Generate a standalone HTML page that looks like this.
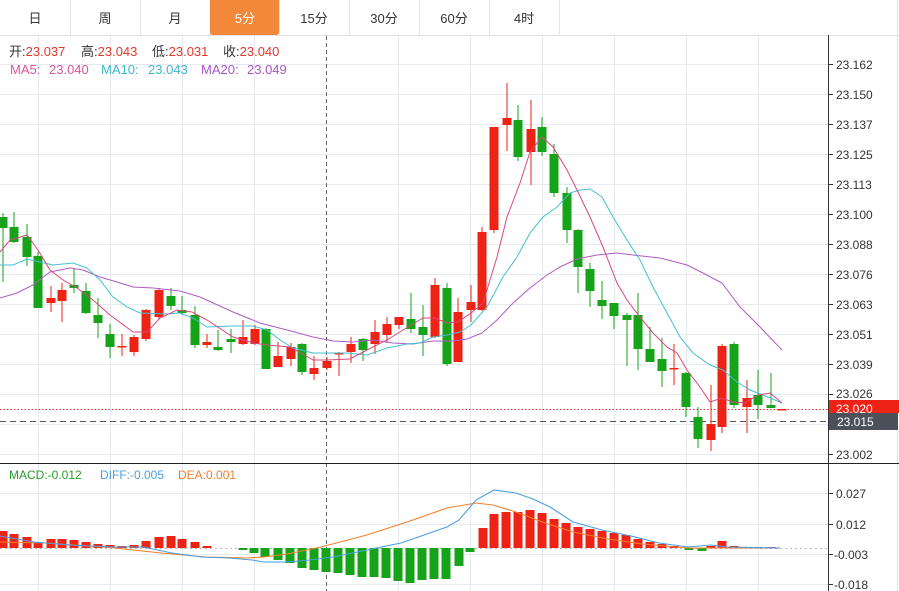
<!DOCTYPE html>
<html><head><meta charset="utf-8">
<style>
html,body{margin:0;padding:0;background:#fff;}
body{width:899px;height:591px;overflow:hidden;font-family:"Liberation Sans","Noto Sans CJK SC",sans-serif;}
svg{display:block}
.r{fill:#ee2316;stroke:#ee2316}
.g{fill:#16a31a;stroke:#16a31a}
line.r,line.g{stroke-width:1}
rect.r,rect.g{stroke-width:0}
.t{font-size:12px;fill:#333}
.tab{font-size:13px;fill:#333;text-anchor:middle;font-family:"Liberation Sans","Noto Sans CJK SC",sans-serif}
</style></head><body>
<svg width="899" height="591" viewBox="0 0 899 591" xmlns="http://www.w3.org/2000/svg">
<rect width="899" height="591" fill="#fff"/>
<rect x="0" y="0" width="899" height="35" fill="#fff"/>
<line x1="0" y1="35.5" x2="899" y2="35.5" stroke="#e3e3e3"/>
<g stroke="#e3e3e3">
<line x1="70.5" y1="0" x2="70.5" y2="35"/><line x1="140.5" y1="0" x2="140.5" y2="35"/><line x1="210.5" y1="0" x2="210.5" y2="35"/><line x1="279.5" y1="0" x2="279.5" y2="35"/><line x1="349.5" y1="0" x2="349.5" y2="35"/><line x1="419.5" y1="0" x2="419.5" y2="35"/><line x1="489.5" y1="0" x2="489.5" y2="35"/><line x1="559.5" y1="0" x2="559.5" y2="35"/>
</g>
<path d="M210 0H279V32Q279 35 276 35H213Q210 35 210 32Z" fill="#f2883a"/>
<text class="tab" x="35" y="23">日</text>
<text class="tab" x="105" y="23">周</text>
<text class="tab" x="175" y="23">月</text>
<text class="tab" x="245" y="23" style="fill:#fff">5分</text>
<text class="tab" x="314" y="23">15分</text>
<text class="tab" x="384" y="23">30分</text>
<text class="tab" x="454" y="23">60分</text>
<text class="tab" x="524" y="23">4时</text>
<line x1="897.5" y1="0" x2="897.5" y2="591" stroke="#e3e3e3"/>
<g stroke="#e6e9ee" stroke-width="1">
<line x1="0" y1="64.5" x2="829" y2="64.5"/><line x1="0" y1="94.5" x2="829" y2="94.5"/><line x1="0" y1="124.5" x2="829" y2="124.5"/><line x1="0" y1="154.5" x2="829" y2="154.5"/><line x1="0" y1="184.5" x2="829" y2="184.5"/><line x1="0" y1="214.5" x2="829" y2="214.5"/><line x1="0" y1="244.5" x2="829" y2="244.5"/><line x1="0" y1="274.5" x2="829" y2="274.5"/><line x1="0" y1="304.5" x2="829" y2="304.5"/><line x1="0" y1="334.5" x2="829" y2="334.5"/><line x1="0" y1="364.5" x2="829" y2="364.5"/><line x1="0" y1="394.5" x2="829" y2="394.5"/><line x1="0" y1="424.5" x2="829" y2="424.5"/><line x1="0" y1="454.5" x2="829" y2="454.5"/>
<line x1="0" y1="493.5" x2="829" y2="493.5"/><line x1="0" y1="524.5" x2="829" y2="524.5"/><line x1="0" y1="554.5" x2="829" y2="554.5"/><line x1="0" y1="584.5" x2="829" y2="584.5"/>
<line x1="38.5" y1="36" x2="38.5" y2="591"/><line x1="110.5" y1="36" x2="110.5" y2="591"/><line x1="182.5" y1="36" x2="182.5" y2="591"/><line x1="254.5" y1="36" x2="254.5" y2="591"/><line x1="398.5" y1="36" x2="398.5" y2="591"/><line x1="470.5" y1="36" x2="470.5" y2="591"/><line x1="542.5" y1="36" x2="542.5" y2="591"/><line x1="614.5" y1="36" x2="614.5" y2="591"/><line x1="686.5" y1="36" x2="686.5" y2="591"/><line x1="758.5" y1="36" x2="758.5" y2="591"/>
</g>
<line x1="326.5" y1="36" x2="326.5" y2="591" stroke="#666" stroke-dasharray="4,3"/>
<line x1="828.5" y1="35" x2="828.5" y2="591" stroke="#333"/>
<line x1="0" y1="463.5" x2="899" y2="463.5" stroke="#222"/>
<g stroke="#333">
<line x1="829" y1="64.5" x2="833" y2="64.5"/><line x1="829" y1="94.5" x2="833" y2="94.5"/><line x1="829" y1="124.5" x2="833" y2="124.5"/><line x1="829" y1="154.5" x2="833" y2="154.5"/><line x1="829" y1="184.5" x2="833" y2="184.5"/><line x1="829" y1="214.5" x2="833" y2="214.5"/><line x1="829" y1="244.5" x2="833" y2="244.5"/><line x1="829" y1="274.5" x2="833" y2="274.5"/><line x1="829" y1="304.5" x2="833" y2="304.5"/><line x1="829" y1="334.5" x2="833" y2="334.5"/><line x1="829" y1="364.5" x2="833" y2="364.5"/><line x1="829" y1="394.5" x2="833" y2="394.5"/><line x1="829" y1="454.5" x2="833" y2="454.5"/>
<line x1="829" y1="493.5" x2="833" y2="493.5"/><line x1="829" y1="524.5" x2="833" y2="524.5"/><line x1="829" y1="554.5" x2="833" y2="554.5"/><line x1="829" y1="584.5" x2="833" y2="584.5"/>
</g>
<g class="t">
<text x="836" y="69">23.162</text><text x="836" y="99">23.150</text><text x="836" y="129">23.137</text><text x="836" y="159">23.125</text><text x="836" y="189">23.113</text><text x="836" y="219">23.100</text><text x="836" y="249">23.088</text><text x="836" y="279">23.076</text><text x="836" y="309">23.063</text><text x="836" y="339">23.051</text><text x="836" y="369">23.039</text><text x="836" y="398">23.026</text><text x="836" y="459">23.002</text>
<text x="836" y="498">0.027</text><text x="836" y="529">0.012</text><text x="834" y="559">-0.003</text><text x="834" y="589">-0.018</text>
</g>
<line x1="0" y1="409.5" x2="829" y2="409.5" stroke="#e03030" stroke-dasharray="1.5,2"/>
<line x1="0" y1="421.5" x2="829" y2="421.5" stroke="#555" stroke-dasharray="6,4"/>
<line x1="0" y1="548.5" x2="829" y2="548.5" stroke="#bbb" stroke-dasharray="2,3"/>
<rect x="829" y="400" width="70" height="13" fill="#ee2316"/>
<text x="836" y="413" style="font-size:12px;fill:#fff">23.020</text>
<rect x="829" y="413" width="69" height="17" fill="#4b505b"/>
<text x="837" y="426" style="font-size:12px;fill:#fff">23.015</text>
<g>
<line class="g" x1="3" y1="213" x2="3" y2="282"/><rect class="g" x="-1.5" y="217" width="9" height="11"/>
<line class="g" x1="14" y1="212" x2="14" y2="243"/><rect class="g" x="9.5" y="227" width="9" height="15"/>
<line class="g" x1="27" y1="224" x2="27" y2="266"/><rect class="g" x="22.5" y="237" width="9" height="20"/>
<line class="g" x1="38" y1="252" x2="38" y2="308"/><rect class="g" x="33.5" y="256" width="9" height="52"/>
<line class="r" x1="51" y1="286" x2="51" y2="312"/><rect class="r" x="46.5" y="298" width="9" height="5"/>
<line class="r" x1="62" y1="283" x2="62" y2="322"/><rect class="r" x="57.5" y="290" width="9" height="11"/>
<line class="g" x1="74" y1="268" x2="74" y2="293"/><rect class="g" x="69.5" y="285" width="9" height="3"/>
<line class="g" x1="86" y1="283" x2="86" y2="314"/><rect class="g" x="81.5" y="291" width="9" height="22"/>
<line class="g" x1="98" y1="298" x2="98" y2="338"/><rect class="g" x="93.5" y="315" width="9" height="8"/>
<line class="g" x1="110" y1="324" x2="110" y2="358"/><rect class="g" x="105.5" y="334" width="9" height="13"/>
<line class="r" x1="122" y1="334" x2="122" y2="356"/><rect class="r" x="117.5" y="346" width="9" height="1.5"/>
<line class="r" x1="134" y1="335" x2="134" y2="356"/><rect class="r" x="129.5" y="337" width="9" height="15"/>
<line class="r" x1="146" y1="309" x2="146" y2="341"/><rect class="r" x="141.5" y="310" width="9" height="29"/>
<line class="r" x1="159" y1="288" x2="159" y2="319"/><rect class="r" x="154.5" y="290" width="9" height="27"/>
<line class="g" x1="171" y1="288" x2="171" y2="310"/><rect class="g" x="166.5" y="296" width="9" height="10"/>
<line class="g" x1="182" y1="296" x2="182" y2="315"/><rect class="g" x="177.5" y="310" width="9" height="3"/>
<line class="g" x1="195" y1="306" x2="195" y2="348"/><rect class="g" x="190.5" y="315" width="9" height="30"/>
<line class="r" x1="207" y1="334" x2="207" y2="348"/><rect class="r" x="202.5" y="342" width="9" height="3"/>
<line class="g" x1="218" y1="330" x2="218" y2="351"/><rect class="g" x="213.5" y="347" width="9" height="3"/>
<line class="g" x1="231" y1="329" x2="231" y2="353"/><rect class="g" x="226.5" y="339" width="9" height="3"/>
<line class="r" x1="243" y1="320" x2="243" y2="345"/><rect class="r" x="238.5" y="337" width="9" height="7"/>
<line class="r" x1="255" y1="325" x2="255" y2="345"/><rect class="r" x="250.5" y="329" width="9" height="15"/>
<line class="g" x1="266" y1="328" x2="266" y2="369"/><rect class="g" x="261.5" y="329" width="9" height="40"/>
<line class="r" x1="278" y1="342" x2="278" y2="367"/><rect class="r" x="273.5" y="356" width="9" height="11"/>
<line class="r" x1="291" y1="343" x2="291" y2="366"/><rect class="r" x="286.5" y="347" width="9" height="12"/>
<line class="g" x1="302" y1="343" x2="302" y2="375"/><rect class="g" x="297.5" y="344" width="9" height="28"/>
<line class="r" x1="314" y1="356" x2="314" y2="380"/><rect class="r" x="309.5" y="368" width="9" height="6"/>
<line class="r" x1="327" y1="357" x2="327" y2="370"/><rect class="r" x="322.5" y="361" width="9" height="7"/>
<line class="r" x1="339" y1="352" x2="339" y2="376"/><rect class="r" x="334.5" y="353" width="9" height="1.5"/>
<line class="r" x1="351" y1="337" x2="351" y2="363"/><rect class="r" x="346.5" y="344" width="9" height="8"/>
<line class="g" x1="363" y1="338" x2="363" y2="361"/><rect class="g" x="358.5" y="339" width="9" height="11"/>
<line class="r" x1="375" y1="320" x2="375" y2="354"/><rect class="r" x="370.5" y="332" width="9" height="12"/>
<line class="r" x1="387" y1="317" x2="387" y2="343"/><rect class="r" x="382.5" y="324" width="9" height="11"/>
<line class="r" x1="399" y1="317" x2="399" y2="329"/><rect class="r" x="394.5" y="317" width="9" height="8"/>
<line class="g" x1="411" y1="293" x2="411" y2="333"/><rect class="g" x="406.5" y="319" width="9" height="10"/>
<line class="g" x1="423" y1="305" x2="423" y2="356"/><rect class="g" x="418.5" y="327" width="9" height="8"/>
<line class="r" x1="435" y1="278" x2="435" y2="338"/><rect class="r" x="430.5" y="285" width="9" height="52"/>
<line class="g" x1="447" y1="283" x2="447" y2="366"/><rect class="g" x="442.5" y="288" width="9" height="76"/>
<line class="r" x1="458" y1="298" x2="458" y2="362"/><rect class="r" x="453.5" y="312" width="9" height="50"/>
<line class="r" x1="471" y1="285" x2="471" y2="322"/><rect class="r" x="466.5" y="302" width="9" height="8"/>
<line class="r" x1="482" y1="227" x2="482" y2="311"/><rect class="r" x="477.5" y="232" width="9" height="78"/>
<line class="r" x1="494" y1="127" x2="494" y2="233"/><rect class="r" x="489.5" y="127" width="9" height="103"/>
<line class="r" x1="507" y1="83" x2="507" y2="151"/><rect class="r" x="502.5" y="118" width="9" height="7"/>
<line class="g" x1="518" y1="105" x2="518" y2="161"/><rect class="g" x="513.5" y="120" width="9" height="37"/>
<line class="r" x1="531" y1="100" x2="531" y2="185"/><rect class="r" x="526.5" y="129" width="9" height="23"/>
<line class="g" x1="542" y1="117" x2="542" y2="156"/><rect class="g" x="537.5" y="127" width="9" height="25"/>
<line class="g" x1="554" y1="144" x2="554" y2="197"/><rect class="g" x="549.5" y="154" width="9" height="39"/>
<line class="g" x1="567" y1="187" x2="567" y2="243"/><rect class="g" x="562.5" y="193" width="9" height="37"/>
<line class="g" x1="578" y1="229" x2="578" y2="293"/><rect class="g" x="573.5" y="230" width="9" height="37"/>
<line class="g" x1="590" y1="263" x2="590" y2="307"/><rect class="g" x="585.5" y="269" width="9" height="22"/>
<line class="g" x1="602" y1="281" x2="602" y2="319"/><rect class="g" x="597.5" y="300" width="9" height="6"/>
<line class="g" x1="614" y1="303" x2="614" y2="329"/><rect class="g" x="609.5" y="303" width="9" height="13"/>
<line class="g" x1="627" y1="313" x2="627" y2="366"/><rect class="g" x="622.5" y="315" width="9" height="5"/>
<line class="g" x1="638" y1="293" x2="638" y2="370"/><rect class="g" x="633.5" y="315" width="9" height="34"/>
<line class="g" x1="650" y1="327" x2="650" y2="362"/><rect class="g" x="645.5" y="349" width="9" height="13"/>
<line class="g" x1="662" y1="338" x2="662" y2="387"/><rect class="g" x="657.5" y="359" width="9" height="12"/>
<line class="r" x1="674" y1="344" x2="674" y2="385"/><rect class="r" x="669.5" y="368" width="9" height="1.5"/>
<line class="g" x1="686" y1="372" x2="686" y2="417"/><rect class="g" x="681.5" y="373" width="9" height="34"/>
<line class="g" x1="698" y1="407" x2="698" y2="448"/><rect class="g" x="693.5" y="417" width="9" height="22"/>
<line class="r" x1="711" y1="385" x2="711" y2="451"/><rect class="r" x="706.5" y="424" width="9" height="16"/>
<line class="r" x1="722" y1="344" x2="722" y2="433"/><rect class="r" x="717.5" y="346" width="9" height="81"/>
<line class="g" x1="734" y1="342" x2="734" y2="408"/><rect class="g" x="729.5" y="344" width="9" height="61"/>
<line class="r" x1="747" y1="380" x2="747" y2="433"/><rect class="r" x="742.5" y="398" width="9" height="9"/>
<line class="g" x1="758" y1="370" x2="758" y2="419"/><rect class="g" x="753.5" y="395" width="9" height="10"/>
<line class="g" x1="771" y1="373" x2="771" y2="407"/><rect class="g" x="766.5" y="405" width="9" height="3"/>
<rect class="r" x="777.5" y="409" width="9" height="1.5"/>
</g>
<polyline fill="none" stroke="#b05cc4" stroke-width="1" points="0,298 17,293 33,285 50,272 70,268 83,270 100,277 117,282 133,287 153,288 180,291 200,297 233,312 260,323 287,330 313,337 333,341 353,342 373,340 393,343 413,344 433,341 453,341 467,339 482,333 497,320 513,303 530,288 547,275 560,267 577,259 597,255 617,253 633,255 660,258 687,265 703,273 722,283 740,307 760,327 782,350"/>
<polyline fill="none" stroke="#45bfd3" stroke-width="1" points="0,265 13,265 27,259 40,262 53,265 73,263 87,268 100,280 113,297 127,307 140,313 167,314 180,313 193,318 207,327 233,326 253,326 267,330 280,340 293,348 313,353 327,353 347,353 367,355 387,348 407,344 420,343 433,337 447,335 460,332 471,325 487,307 503,277 517,257 530,233 543,217 557,207 570,193 580,190 590,189 602,197 613,217 627,240 640,260 653,287 667,313 680,337 693,353 710,365 723,370 737,382 750,390 763,395 782,403"/>
<polyline fill="none" stroke="#d8487e" stroke-width="1" points="0,252 10,240 27,235 38,250 50,270 63,280 77,288 93,300 110,315 133,332 147,332 160,318 177,310 192,312 207,320 233,337 253,343 267,345 290,347 313,360 327,360 350,359 367,350 387,340 403,330 423,318 435,318 447,323 458,322 471,313 483,303 497,257 507,217 520,183 530,152 542,137 553,147 567,170 577,190 590,217 603,247 617,283 627,300 640,317 653,333 667,347 677,353 687,370 700,387 710,402 722,398 733,402 745,403 758,395 770,393 782,403"/>
<g>
<rect class="r" x="-1.5" y="531" width="9" height="17"/><rect class="r" x="9.5" y="534" width="9" height="14"/><rect class="r" x="22.5" y="537" width="9" height="11"/><rect class="r" x="33.5" y="542" width="9" height="6"/><rect class="r" x="46.5" y="539" width="9" height="9"/><rect class="r" x="57.5" y="539" width="9" height="9"/><rect class="r" x="69.5" y="540" width="9" height="8"/><rect class="r" x="81.5" y="542" width="9" height="6"/><rect class="r" x="93.5" y="544" width="9" height="4"/><rect class="r" x="105.5" y="545" width="9" height="3"/><rect class="r" x="117.5" y="546" width="9" height="2"/><rect class="r" x="129.5" y="545" width="9" height="3"/><rect class="r" x="141.5" y="541" width="9" height="7"/><rect class="r" x="154.5" y="537" width="9" height="11"/><rect class="r" x="166.5" y="536" width="9" height="12"/><rect class="r" x="177.5" y="539" width="9" height="9"/><rect class="r" x="190.5" y="542" width="9" height="6"/><rect class="r" x="202.5" y="546" width="9" height="2"/>
<rect class="g" x="238.5" y="548" width="9" height="2"/><rect class="g" x="249.5" y="548" width="9" height="5"/><rect class="g" x="260.5" y="548" width="9" height="9"/><rect class="g" x="273.5" y="548" width="9" height="12"/><rect class="g" x="285.5" y="548" width="9" height="15"/><rect class="g" x="297.5" y="548" width="9" height="20"/><rect class="g" x="309.5" y="548" width="9" height="22"/><rect class="g" x="321.5" y="548" width="9" height="24"/><rect class="g" x="333.5" y="548" width="9" height="25"/><rect class="g" x="345.5" y="548" width="9" height="27"/><rect class="g" x="357.5" y="548" width="9" height="29"/><rect class="g" x="369.5" y="548" width="9" height="29"/><rect class="g" x="381.5" y="548" width="9" height="30"/><rect class="g" x="393.5" y="548" width="9" height="33"/><rect class="g" x="405.5" y="548" width="9" height="35"/><rect class="g" x="417.5" y="548" width="9" height="32"/><rect class="g" x="429.5" y="548" width="9" height="31"/><rect class="g" x="441.5" y="548" width="9" height="31"/><rect class="g" x="454.5" y="548" width="9" height="18"/><rect class="g" x="465.5" y="548" width="9" height="4"/>
<rect class="r" x="478.5" y="528" width="9" height="20"/><rect class="r" x="489.5" y="514" width="9" height="34"/><rect class="r" x="501.5" y="512" width="9" height="36"/><rect class="r" x="513.5" y="512" width="9" height="36"/><rect class="r" x="525.5" y="510" width="9" height="38"/><rect class="r" x="537.5" y="513" width="9" height="35"/><rect class="r" x="549.5" y="519" width="9" height="29"/><rect class="r" x="561.5" y="523" width="9" height="25"/><rect class="r" x="573.5" y="527" width="9" height="21"/><rect class="r" x="585.5" y="529" width="9" height="19"/><rect class="r" x="597.5" y="531" width="9" height="17"/><rect class="r" x="609.5" y="533" width="9" height="15"/><rect class="r" x="621.5" y="535" width="9" height="13"/><rect class="r" x="633.5" y="539" width="9" height="9"/><rect class="r" x="645.5" y="542" width="9" height="6"/><rect class="r" x="657.5" y="544" width="9" height="4"/><rect class="r" x="669.5" y="546" width="9" height="2"/>
<rect class="g" x="684.5" y="548" width="9" height="2"/><rect class="g" x="697.5" y="548" width="9" height="3"/><rect class="r" x="706.5" y="546" width="9" height="2"/><rect class="r" x="717.5" y="541" width="9" height="7"/><rect class="r" x="729.5" y="546" width="9" height="2"/><rect class="r" x="742.5" y="547" width="9" height="1"/><rect class="r" x="753.5" y="547" width="9" height="1"/><rect class="r" x="766.5" y="547" width="9" height="1"/>
</g>
<polyline fill="none" stroke="#f0802e" stroke-width="1.1" points="0,542 46,543 115,548 161,553 206,557 247,558 264,557 287,554 321,547 367,535 413,520 447,508 476,503 493,505 516,512 545,523 573,532 608,539 642,544 688,548 780,548"/>
<polyline fill="none" stroke="#4a9fe0" stroke-width="1.1" points="0,536 34,542 69,545 115,547 143,547 172,553 201,557 229,558 252,560 264,562 287,562 310,560 333,557 367,550 401,543 424,535 447,527 459,520 476,500 494,490 516,493 533,499 550,507 573,522 602,530 631,536 659,543 688,547 711,545 728,547 780,548"/>
<g style="font-size:13px">
<text y="56"><tspan x="9" fill="#333">开:</tspan><tspan fill="#e0392c">23.037</tspan><tspan x="81" fill="#333">高:</tspan><tspan fill="#e0392c">23.043</tspan><tspan x="152" fill="#333">低:</tspan><tspan fill="#e0392c">23.031</tspan><tspan x="223" fill="#333">收:</tspan><tspan fill="#e0392c">23.040</tspan></text>
<text y="74" textLength="0"><tspan x="10" fill="#d8579a">MA5:</tspan><tspan x="49" fill="#d8579a">23.040</tspan><tspan x="101" fill="#3ab9cc">MA10:</tspan><tspan x="148" fill="#3ab9cc">23.043</tspan><tspan x="201" fill="#a456c2">MA20:</tspan><tspan x="247" fill="#a456c2">23.049</tspan></text>
</g>
<text y="479" style="font-size:12px"><tspan x="9" fill="#2a9a2a">MACD:-0.012</tspan><tspan x="100" fill="#4a9fe0">DIFF:-0.005</tspan><tspan x="178" fill="#f0802e">DEA:0.001</tspan></text>
</svg>
</body></html>
